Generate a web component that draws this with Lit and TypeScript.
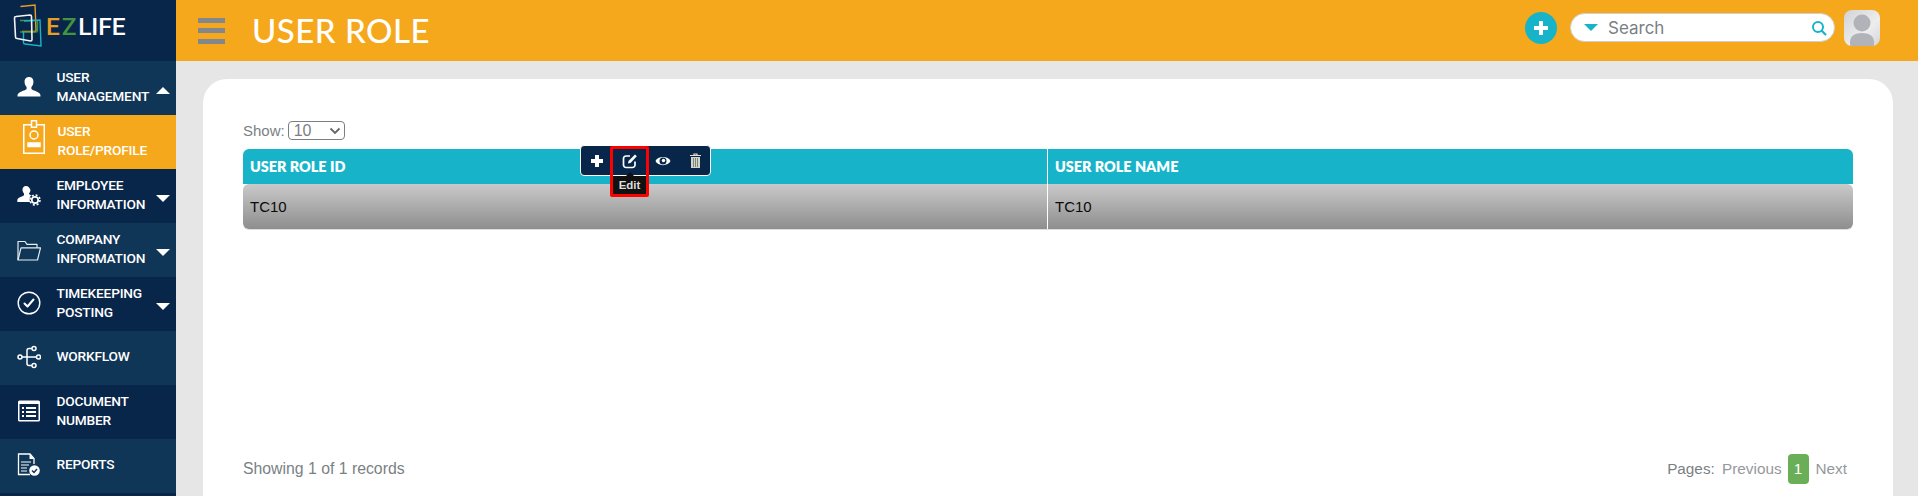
import { LitElement, html, css, svg } from "lit";
import { customElement } from "lit/decorators.js";

const icons: Record<string, unknown> = {
  user: svg`<path d="M12 2c-3 0-4.600 2.200-4.400 5.200.1 1.900.9 3.600 2 4.700v2.200c-1 1.300-6 2.200-8.300 4.400-.8.8-.8 2-.8 3h23c0-1 0-2.200-.8-3-2.300-2.200-7.300-3.100-8.300-4.400v-2.200c1.100-1.100 1.900-2.800 2-4.700C16.600 4.200 15 2 12 2z" fill="#fff"/>`,
  emp: svg`<path d="M9 3c-2.400 0-3.700 1.800-3.500 4 .1 1.500.7 2.700 1.500 3.500v1.700c-.8 1-4.600 1.700-6 3.300-.6.700-.7 1.600-.7 3.500h13.200c-.8-1-1-2-1-3 0-1.500.7-3 1.800-3.800-.9-.4-1.700-.7-2.300-1.200v-.5c.8-.8 1.400-2 1.500-3.500C12.700 4.800 11.400 3 9 3z" fill="#fff"/><circle cx="18" cy="17" r="3.200" fill="none" stroke="#fff" stroke-width="1.700"/><circle cx="18" cy="17" r="5" fill="none" stroke="#fff" stroke-width="1.500" stroke-dasharray="2 1.930"/>`,
  folder: svg`<g fill="none" stroke="#e8edf1" stroke-width="1.200" stroke-linejoin="round"><path d="M1 23V4.500h7l2 2.800h10v3.500"/><path d="M1 23l3-12.200h19.500L20.500 23z"/></g>`,
  check: svg`<circle cx="12" cy="12" r="10.800" fill="none" stroke="#fff" stroke-width="1.400"/><path d="M7.500 12.500l3 3 6-7" fill="none" stroke="#fff" stroke-width="2" stroke-linecap="round" stroke-linejoin="round"/>`,
  flow: svg`<g fill="none" stroke="#fff" stroke-width="1.500"><circle cx="3" cy="12" r="2"/><circle cx="21.500" cy="12" r="2"/><circle cx="17" cy="3.500" r="2"/><circle cx="17" cy="20.500" r="2"/><path d="M5 12h14.500M15 3.500h-3c-1.500 0-2 1-2 2v13c0 1 .5 2 2 2h3"/></g>`,
  doc: svg`<rect x="1" y="1.500" width="22" height="21" rx="1.500" fill="#fff"/><rect x="2.500" y="5" width="19" height="16" fill="#08264a"/><g fill="#fff"><rect x="5" y="8" width="2" height="2"/><rect x="5" y="12" width="2" height="2"/><rect x="5" y="16" width="2" height="2"/><rect x="9" y="8" width="10" height="2"/><rect x="9" y="12" width="10" height="2"/><rect x="9" y="16" width="10" height="2"/></g>`,
  rep: svg`<path d="M13 21.500H1.500V1h11.500l4 4.500V11" fill="none" stroke="#fff" stroke-width="1.300"/><path d="M12.500 1v5H17" fill="#fff"/><path d="M4 9h10M4 12h8M4 15h6M4 18h6" stroke="#fff" stroke-width="1.200"/><circle cx="17.500" cy="17.500" r="5.300" fill="#fff"/><path d="M15 17.500l2 2 3-3.500" fill="none" stroke="#0f3557" stroke-width="1.500"/>`,
};

const items = [
  { l: ["USER", "MANAGEMENT"], i: "user", c: "up", alt: true },
  { l: ["EMPLOYEE", "INFORMATION"], i: "emp", c: "down", alt: false },
  { l: ["COMPANY", "INFORMATION"], i: "folder", c: "down", alt: true },
  { l: ["TIMEKEEPING", "POSTING"], i: "check", c: "down", alt: false },
  { l: ["WORKFLOW"], i: "flow", c: "", alt: true },
  { l: ["DOCUMENT", "NUMBER"], i: "doc", c: "", alt: false },
  { l: ["REPORTS"], i: "rep", c: "", alt: true },
];

@customElement("app-root")
export class AppRoot extends LitElement {
  static styles = css`
    :host { display: flex; width: 1918px; height: 496px; overflow: hidden; background: #e6e6e6; font-family: "Liberation Sans", Arial, sans-serif; }
    .side { width: 176px; flex: none; background: #08264a; display: flex; flex-direction: column; }
    .logo { height: 61px; flex: none; display: flex; align-items: flex-start; }
    .logo svg { margin: 3px 0 0 13px; width: 32px; height: 47px; flex: none; }
    .lt { font-family: Roboto, sans-serif; font-size: 24.500px; font-weight: 500; line-height: 29px; margin: 12px 0 0 1px; color: #fff; }
    .lt .e { color: #e79f23; letter-spacing: 2px; } .lt .z { color: #43933f; letter-spacing: 1.500px; }
    .row { height: 54px; flex: none; display: flex; align-items: center; color: #fff; background: #08264a; position: relative; }
    .row.alt { background: #0f3557; }
    .row.act { background: #f6a81c; }
    .ic { width: 24px; height: 24px; margin: 0 0 2px 17px; flex: none; }
    .lbl { margin-left: 16px; margin-right: 0; padding-bottom: 3px; font-family: Roboto, sans-serif; font-size: 13.700px; line-height: 19px; font-weight: 500; letter-spacing: -0.2px; position: relative; left: -0.5px; }
    .act .lbl { margin-left: 13px; }
    .act .ic { width: 22px; height: 34px; margin: 0 0 11px 23px; }
    .car { position: absolute; left: 156px; top: 26px; width: 0; height: 0; border-left: 7.500px solid transparent; border-right: 7.500px solid transparent; }
    .car.down { border-top: 7px solid #fff; }
    .car.up { border-bottom: 7px solid #fff; }
    .main { flex: 1; display: flex; flex-direction: column; min-width: 0; }
    .top { height: 61px; flex: none; background: #f6a81c; display: flex; align-items: center; }
    .burger { width: 27px; margin-left: 22px; display: flex; flex-direction: column; gap: 5.500px; }
    .burger i { display: block; height: 5px; background: #83868a; }
    h1 { margin: 0 0 0 27px; font-family: Lato, sans-serif; font-weight: 500; font-size: 33px; color: #fff; letter-spacing: 0.5px; line-height: 61px; flex: 1; }
    .tools { display: flex; align-items: center; padding-bottom: 6px; }
    .plus { width: 32px; height: 32px; border-radius: 50%; background: #17b4c9; display: flex; align-items: center; justify-content: center; flex: none; }
    .search { width: 265px; height: 29px; box-sizing: border-box; margin-left: 13px; border-radius: 15px; background: #fff; border: 1px solid #cfcfcf; display: flex; align-items: center; }
    .search .tri { margin-left: 13px; width: 0; height: 0; border-left: 7.500px solid transparent; border-right: 7.500px solid transparent; border-top: 7px solid #17b4c9; }
    .search span { margin-left: 10px; font-family: Inter, sans-serif; font-size: 17px; color: #7b7f84; flex: 1; }
    .search svg { margin-right: 7px; }
    .ava { width: 36px; height: 36px; margin-left: 9px; margin-right: 38px; border-radius: 8px; overflow: hidden; flex: none; }
    .wrap { flex: 1; padding: 18px 25px 0 27px; min-height: 0; }
    .card { position: relative; height: 100%; box-sizing: border-box; background: #fff; border-radius: 24px 24px 0 0; padding: 40px 40px 0 40px; display: flex; flex-direction: column; }
    .show { display: flex; align-items: center; height: 20px; color: #7b7f84; font-size: 15px; gap: 3px; margin-bottom: 9px; margin-top: 1px; }
    .sel { width: 57px; height: 19px; box-sizing: border-box; border: 1px solid #7b7f84; border-radius: 4px; font-size: 16px; line-height: 17px; padding-left: 5px; position: relative; }
    .sel svg { position: absolute; right: 3px; top: 5px; }
    .thead { display: grid; grid-template-columns: 804px 1fr; height: 35px; background: #17b4c9; border-radius: 6px 6px 0 0; color: #fff; font-family: Lato, sans-serif; font-weight: 800; font-size: 14.400px; line-height: 35px; }
    .thead div, .tr div { padding-left: 7px; }
    .thead div + div { border-left: 1px solid #fff; }
    .tr { display: grid; grid-template-columns: 804px 1fr; height: 45px; border-radius: 6px; background: linear-gradient(#c9c9c9, #8e8e8e); color: #0a0a0a; font-size: 15px; line-height: 45px; box-shadow: 0 1px 0 #ddd; }
    .tr div + div { border-left: 1px solid #fff; }
    .foot { margin-top: auto; height: 30px; margin-bottom: 12px; display: flex; align-items: center; justify-content: space-between; color: #7b7f84; font-size: 15.800px; }
    .pages { display: flex; align-items: center; color: #7b7f84; margin-right: 6px; font-size: 15.300px; }
    .pages .dim { color: #95989c; margin-left: 3px; }
    .pg { width: 21px; height: 30px; border-radius: 4px; background: #6aaf58; color: #fff; text-align: center; line-height: 30px; margin: 0 7px 0 6px; }
    .bar { position: absolute; left: 377px; top: 66px; width: 131px; height: 31px; box-sizing: border-box; background: #08264a; border: 1px solid #fff; border-radius: 4px; display: flex; align-items: center; }
    .bar .t { display: flex; justify-content: center; flex: none; width: 33px; margin-left: -0.25px; }
    .tip { position: absolute; left: 407px; top: 67px; width: 39px; height: 51px; box-sizing: border-box; border: 3px solid #f00; border-radius: 2px; display: flex; flex-direction: column; justify-content: flex-end; }
    .tip b { display: block; height: 18px; background: #111; color: #ddd; font-size: 11.500px; font-weight: 700; text-align: center; line-height: 18px; position: relative; }
    .tip b::before { content: ""; position: absolute; left: 13px; top: -4px; border-left: 4px solid transparent; border-right: 4px solid transparent; border-bottom: 4px solid #111; }
  `;
  render() {
    const row = (it: (typeof items)[0]) => html`<div class="row ${it.alt ? "alt" : ""}">
      <svg class="ic" viewBox="0 0 24 24">${icons[it.i]}</svg>
      <div class="lbl">${it.l.map((t) => html`<div>${t}</div>`)}</div>
      ${it.c ? html`<span class="car ${it.c}"></span>` : ""}
    </div>`;
    return html`
      <div class="side">
        <div class="logo">
          <svg viewBox="13 3 32 47" fill="none" stroke-width="1.400">
            <path d="M20.500 6.500L35 5l1 25c0 1-.5 1.500-1.500 1.500H22" stroke="#e79f23"/>
            <path d="M20 20.500h16c1 0 1.500.5 1.500 1.500v8.500c0 1-.5 1.500-1.500 1.500H31" stroke="#43933f"/>
            <path d="M20 32h11" stroke="#43933f"/>
            <path d="M24 21l16-1 1 26-16-2c-1 0-1.500-.5-1.500-1.500V32" stroke="#17b4c9"/>
            <path d="M16 16.500L30 15c1 0 1.500.5 1.500 1.500l.5 23c0 1-.5 1.500-1.500 1.500L17 38.500c-1 0-1.500-.5-1.500-1.500l-1-19c0-1 .5-1.500 1.500-1.500z" stroke="#f3f3f3" stroke-width="1.600"/>
          </svg>
          <div class="lt"><span class="e">E</span><span class="z">Z</span>LIFE</div>
        </div>
        ${row(items[0])}
        <div class="row act">
          <svg class="ic" viewBox="0 0 22 34" fill="none" stroke="#fff" stroke-width="1.500">
            <rect x="0.750" y="4.750" width="20.500" height="28.500"/><rect x="8.500" y="0.750" width="5" height="6.500" fill="#f6a81c"/>
            <circle cx="11" cy="15" r="4"/><rect x="5" y="23" width="12" height="3.500" fill="#fff"/>
          </svg>
          <div class="lbl"><div>USER</div><div>ROLE/PROFILE</div></div>
        </div>
        ${items.slice(1).map(row)}
        <div style="flex:1"></div>
      </div>
      <div class="main">
        <div class="top">
          <div class="burger"><i></i><i></i><i></i></div>
          <h1>USER ROLE</h1>
          <div class="tools">
            <div class="plus"><svg width="16" height="16" viewBox="0 0 16 16"><path d="M6 1h4v5h5v4h-5v5H6v-5H1V6h5z" fill="#fff"/></svg></div>
            <div class="search"><i class="tri"></i><span>Search</span>
              <svg width="16" height="16" viewBox="0 0 16 16" fill="none" stroke="#17b4c9"><circle cx="7" cy="7" r="5" stroke-width="2"/><path d="M10.500 10.500L15 15" stroke-width="2.200"/></svg>
            </div>
            <svg class="ava" viewBox="0 0 36 36"><defs><linearGradient id="g" x1="0" y1="0" x2="1" y2="1"><stop offset="0" stop-color="#d2d3d5"/><stop offset="0.600" stop-color="#ededee"/><stop offset="1" stop-color="#d5d6d8"/></linearGradient></defs><rect width="36" height="36" fill="url(#g)"/><circle cx="18" cy="13" r="8.500" fill="#b2b3b8"/><path d="M6 36v-4c0-6 5-9 12-9s12 3 12 9v4z" fill="#b2b3b8"/></svg>
          </div>
        </div>
        <div class="wrap">
          <div class="card">
            <div class="show">Show: <div class="sel">10<svg width="12" height="8" viewBox="0 0 12 8"><path d="M1.500 1.500L6 6l4.500-4.500" fill="none" stroke="#666" stroke-width="1.800"/></svg></div></div>
            <div class="thead"><div>USER ROLE ID</div><div>USER ROLE NAME</div></div>
            <div class="tr"><div>TC10</div><div>TC10</div></div>
            <div class="foot">
              <span>Showing 1 of 1 records</span>
              <div class="pages"><span>Pages:</span><span class="dim">&nbsp;Previous</span><span class="pg">1</span><span class="dim" style="margin-left:0">Next</span></div>
            </div>
            <div class="bar">
              <span class="t"><svg width="14" height="14" viewBox="0 0 14 14"><path d="M5 1h4v4h4v4H9v4H5V9H1V5h4z" fill="#fff"/></svg></span>
              <span class="t"><svg width="16" height="16" viewBox="0 0 16 16" fill="none" stroke="#fff" stroke-width="1.700"><path d="M13 8.500V12a2.500 2.500 0 0 1-2.500 2.500H4A2.500 2.500 0 0 1 1.500 12V5.500A2.500 2.500 0 0 1 4 3h4"/><path d="M6 10.500l.5-2.500L13 1.500l1.800 1.800L8.500 10z" fill="#fff" stroke="none"/></svg></span>
              <span class="t"><svg width="16" height="12" viewBox="0 0 16 12"><path d="M0.500 6C2.500 .5 13.500 .5 15.500 6 13.500 11.500 2.500 11.500 .5 6z" fill="#fff"/><circle cx="8" cy="6" r="3.500" fill="#08264a"/><circle cx="8.500" cy="5.500" r="1.700" fill="#fff"/></svg></span>
              <span class="t"><svg width="13" height="15" viewBox="0 0 13 15"><path d="M1 2.500h11M5 2.500V1h3v1.500" stroke="#e9e4d2" fill="none" stroke-width="1.200"/><path d="M2 4h9v11H2z" fill="#d8d3bd"/><path d="M4.500 5v9M6.500 5v9M8.500 5v9" stroke="#6f8796" stroke-width="1"/></svg></span>
            </div>
            <div class="tip"><b>Edit</b></div>
          </div>
        </div>
      </div>
    `;
  }
}
